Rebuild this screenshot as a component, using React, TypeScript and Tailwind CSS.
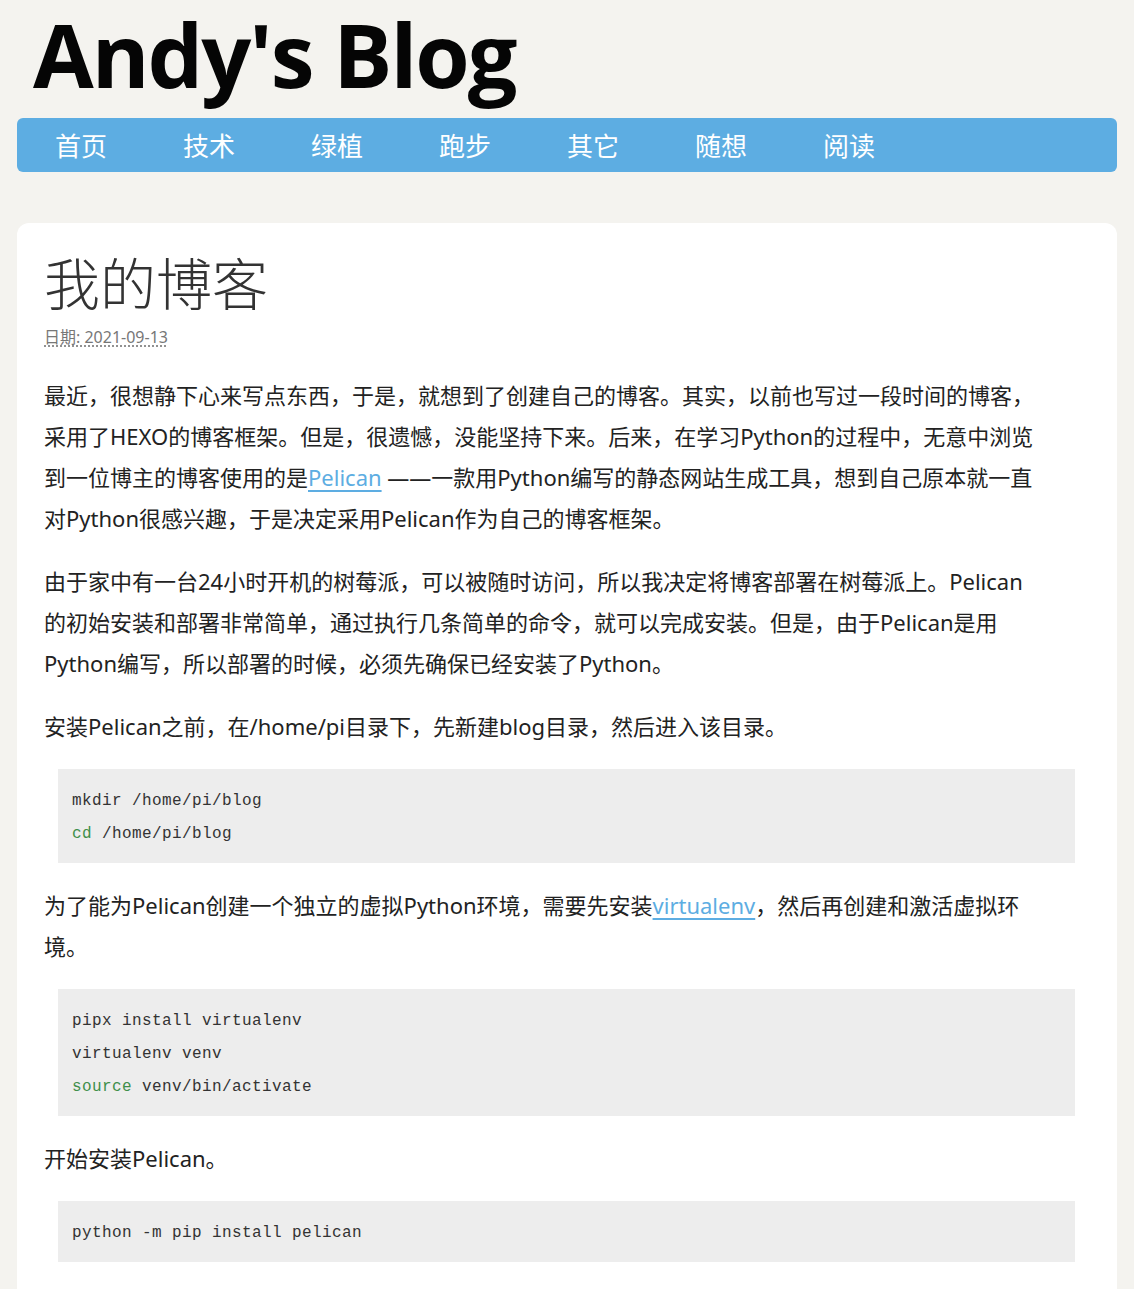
import React from 'react';

const navItems = ['首页', '技术', '绿植', '跑步', '其它', '随想', '阅读'];

const body = "font-['Noto_Sans','Noto_Sans_CJK_SC',sans-serif]";
const mono = "font-['Liberation_Mono','Noto_Sans_CJK_SC',monospace]";

// code block
const Code: React.FC<{ lines: React.ReactNode[] }> = ({ lines }) => (
  <pre className={`ml-[14px] mt-[22px] bg-[#ededed] px-[14px] pb-[12px] pt-[16px] text-[16px] leading-[33px] tracking-[0.4px] text-[#333] ${mono}`}>
    {lines.map((l, i) => (
      <div key={i}>{l}</div>
    ))}
  </pre>
);

const Kw: React.FC<{ children: React.ReactNode }> = ({ children }) => (
  <span className="text-[#3f8f4a]">{children}</span>
);

const Link: React.FC<{ children: React.ReactNode }> = ({ children }) => (
  <a href="#" className="text-[#5dade2] underline underline-offset-[4px]">{children}</a>
);

const P: React.FC<{ children: React.ReactNode; first?: boolean }> = ({ children, first }) => (
  <p className={`${first ? 'mt-[28px]' : 'mt-[22px]'} text-[22px] leading-[41px] text-[#222]`}>{children}</p>
);

export default function App() {
  return (
    <div className={`min-h-screen bg-[#f4f3ef] px-[17px] ${body}`}>
      <header className="pt-[3px]">
        <h1 className="pl-[16px] font-['Open_Sans',sans-serif] text-[88px] font-bold leading-[102px] tracking-[-2px] text-[#050505]">
          Andy's Blog
        </h1>
        <nav className="mt-[13px] flex h-[54px] items-center rounded-[6px] bg-[#5dade2]">
          {navItems.map((n) => (
            <a key={n} href="#" className="w-[128px] text-center font-['Noto_Sans_CJK_SC',sans-serif] text-[26px] leading-[54px] text-white">
              {n}
            </a>
          ))}
        </nav>
      </header>

      <main className="mt-[51px] rounded-t-[12px] bg-white pb-[60px] pl-[27px] pr-[42px] pt-[24px]">
        <h2 className="font-['Noto_Sans_CJK_SC',sans-serif] text-[56px] font-light leading-[67px] text-[#333]">我的博客</h2>
        <div className="mt-[13px] text-[16px] leading-[20px] text-[#777]">
          <abbr title="2021-09-13" className="underline decoration-dotted underline-offset-[3px]">
            日期: 2021-09-13
          </abbr>
        </div>

        <P first>
          最近，很想静下心来写点东西，于是，就想到了创建自己的博客。其实，以前也写过一段时间的博客，
          <br />
          采用了HEXO的博客框架。但是，很遗憾，没能坚持下来。后来，在学习Python的过程中，无意中浏览
          <br />
          到一位博主的博客使用的是<Link>Pelican</Link> ——一款用Python编写的静态网站生成工具，想到自己原本就一直
          <br />
          对Python很感兴趣，于是决定采用Pelican作为自己的博客框架。
        </P>
        <P>
          由于家中有一台24小时开机的树莓派，可以被随时访问，所以我决定将博客部署在树莓派上。Pelican
          <br />
          的初始安装和部署非常简单，通过执行几条简单的命令，就可以完成安装。但是，由于Pelican是用
          <br />
          Python编写，所以部署的时候，必须先确保已经安装了Python。
        </P>
        <P>安装Pelican之前，在/home/pi目录下，先新建blog目录，然后进入该目录。</P>
        <Code lines={['mkdir /home/pi/blog', <><Kw>cd</Kw> /home/pi/blog</>]} />
        <P>
          为了能为Pelican创建一个独立的虚拟Python环境，需要先安装<Link>virtualenv</Link>，然后再创建和激活虚拟环
          <br />
          境。
        </P>
        <Code
          lines={['pipx install virtualenv', 'virtualenv venv', <><Kw>source</Kw> venv/bin/activate</>]}
        />
        <P>开始安装Pelican。</P>
        <Code lines={['python -m pip install pelican']} />
      </main>
    </div>
  );
}
